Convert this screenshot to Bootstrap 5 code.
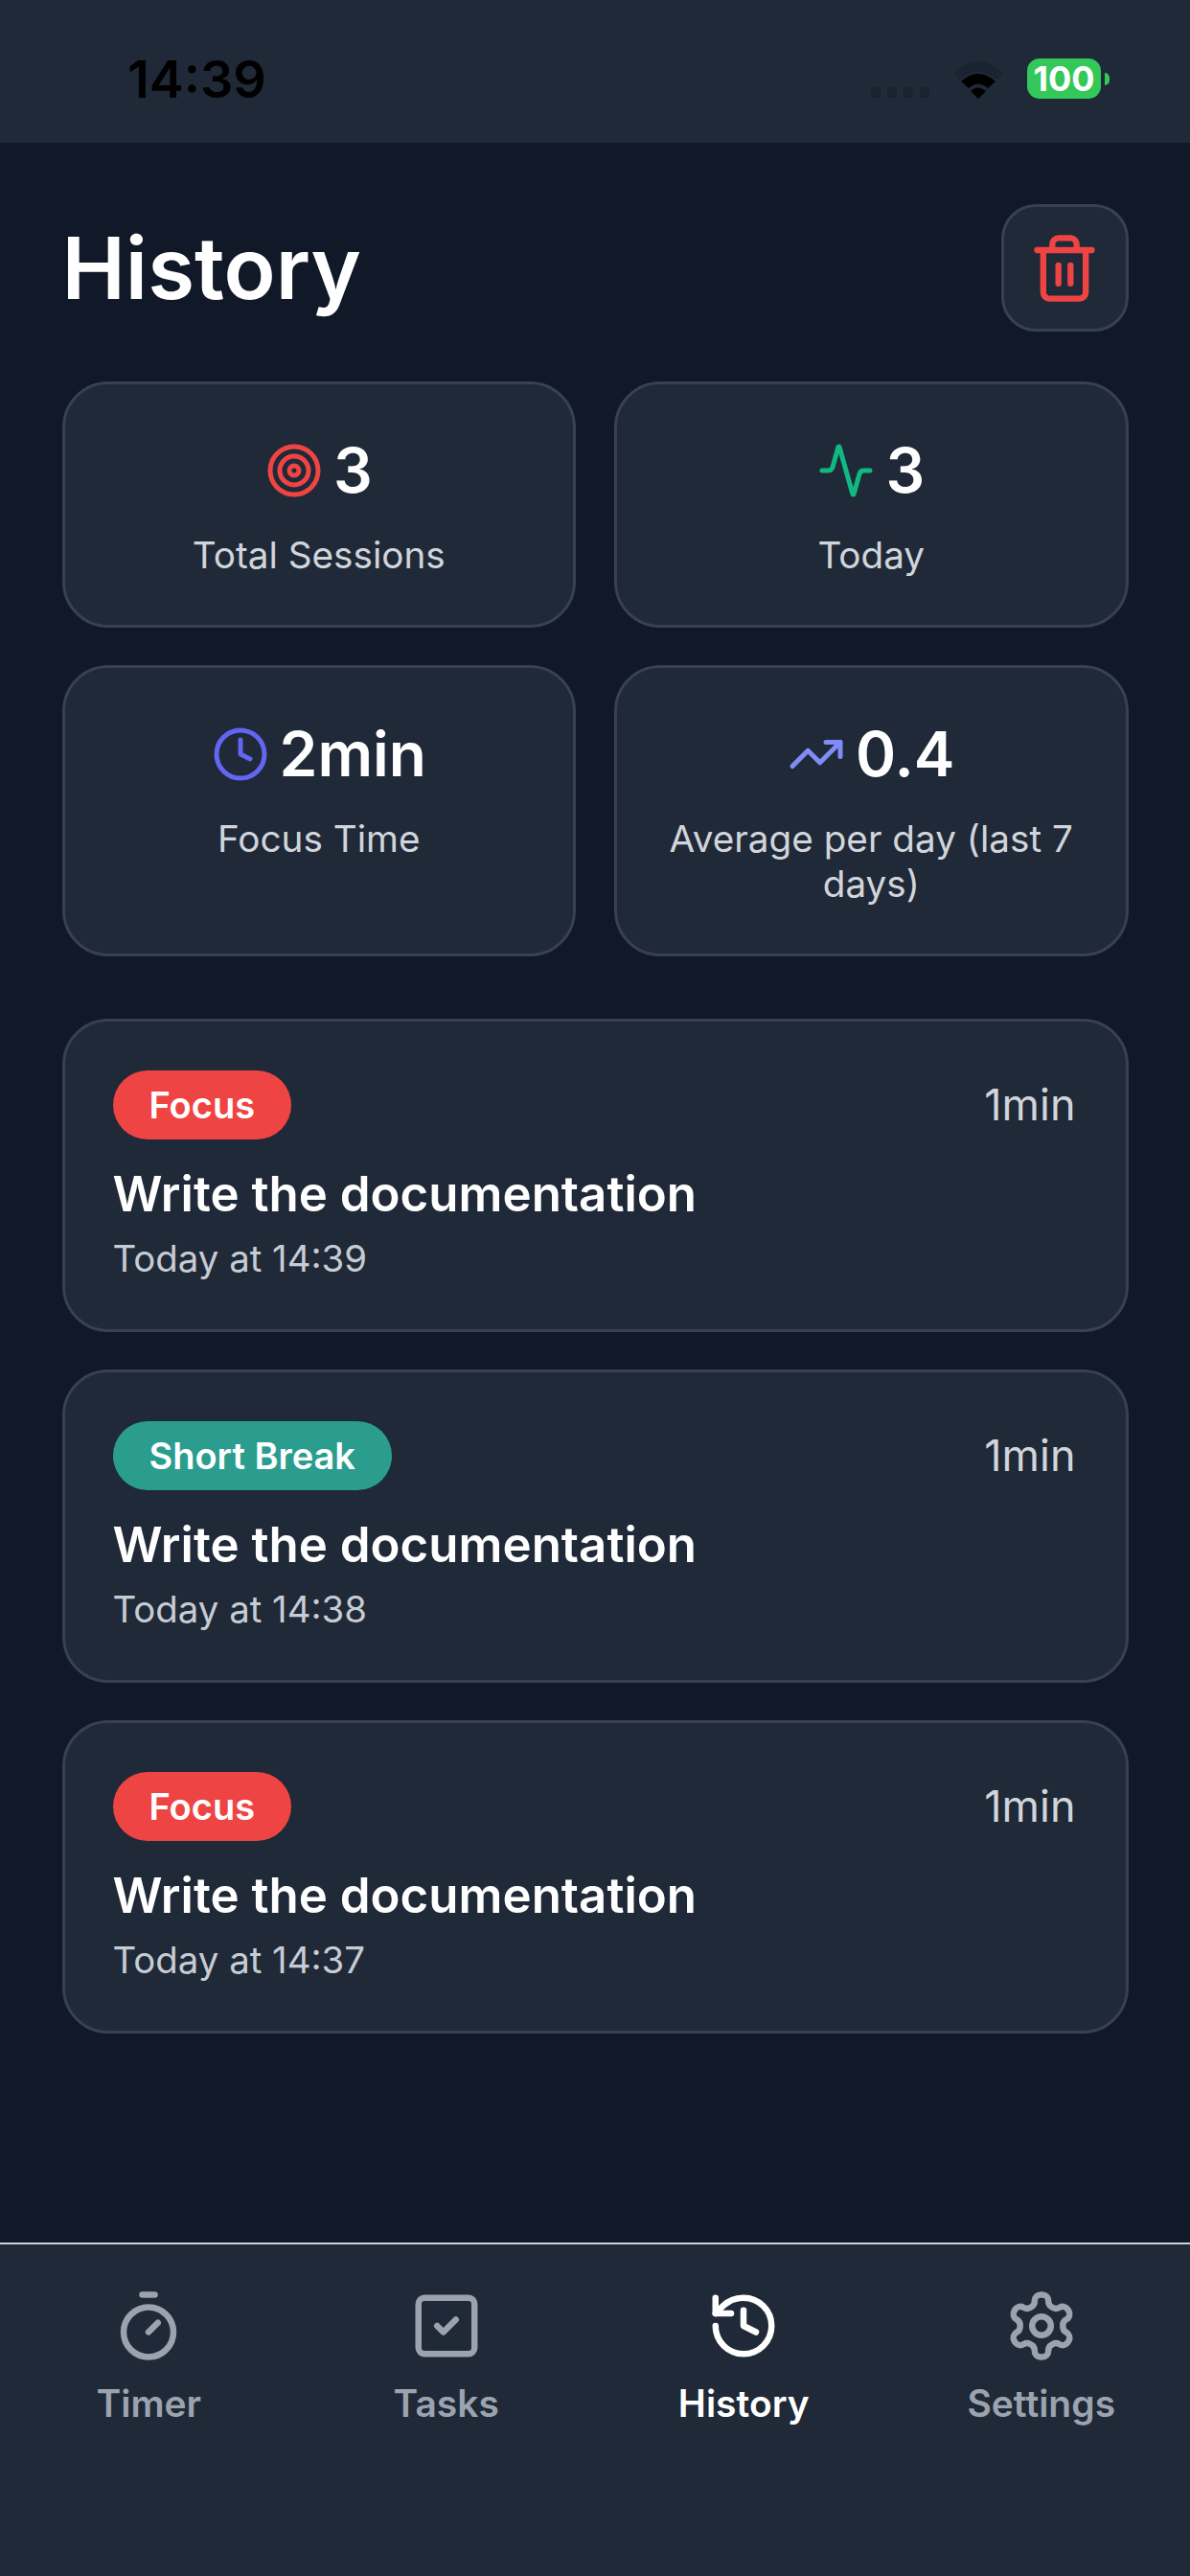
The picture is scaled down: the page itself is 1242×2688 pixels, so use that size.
<!DOCTYPE html>
<html lang="en">
<head>
    <meta charset="UTF-8">
    <title>History</title>
    <link href="https://cdn.jsdelivr.net/npm/bootstrap@5.3.2/dist/css/bootstrap.min.css" rel="stylesheet">
    <style>
        body {
            background-color: #111827;
            font-family: "Inter", "Liberation Sans", sans-serif;
            color: #fff;
        }
        .status-bar {
            height: 149px;
            background-color: #1f2937;
            padding: 56px 84px 0 133px;
        }
        .status-time {
            font-size: 54px;
            font-weight: 600;
            line-height: 54px;
            color: #000;
        }
        .status-right {
            margin-top: 5px;
        }
        .signal-dots {
            gap: 7px;
            padding-bottom: 1px;
        }
        .signal-dot {
            width: 10px;
            height: 11px;
            border-radius: 4px;
            background-color: #19222e;
        }
        .wifi-icon {
            margin: 0 25px;
        }
        .battery-body {
            width: 77px;
            height: 42px;
            border-radius: 13px;
            background-color: #34c759;
            font-size: 36px;
            font-weight: 700;
            line-height: 42px;
            text-align: center;
        }
        .battery-nub {
            width: 5px;
            height: 13px;
            margin-left: 4px;
            border-radius: 0 6px 6px 0;
            background-color: #34c759;
        }
        .page-main {
            padding: 64px 64.5px 0;
        }
        .page-title {
            font-size: 89px;
            font-weight: 600;
            line-height: 133px;
            margin: 0;
        }
        .trash-btn {
            width: 133px;
            height: 133px;
            background-color: #1f2937;
            border: 3px solid #374151;
            border-radius: 36px;
            padding: 0;
        }
        .stat-grid {
            display: grid;
            grid-template-columns: 1fr 1fr;
            column-gap: 40px;
            row-gap: 39px;
            margin-top: 52px;
            margin-bottom: 65px;
        }
        .dark-card {
            background-color: #1f2937;
            border: 3px solid #374151;
            border-radius: 48px;
            color: #fff;
        }
        .stat-card {
            padding: 48px 30px 49px;
        }
        .stat-value {
            font-size: 64px;
            font-weight: 600;
            line-height: 84px;
            gap: 11px;
        }
        .stat-label {
            margin-top: 23px;
            font-size: 38.7px;
            line-height: 47px;
            color: #d1d5db;
        }
        .item-card {
            padding: 51px 52px 51px 50px;
        }
        .item-stack {
            gap: 39px;
        }
        .type-pill {
            height: 72px;
            padding: 0 38px;
            font-size: 38px;
            font-weight: 600;
            line-height: 72px;
            color: #fff;
        }
        .pill-focus {
            background-color: #ef4444;
        }
        .pill-break {
            background-color: #2a9d8f;
        }
        .item-length {
            font-size: 45px;
            color: #d1d5db;
        }
        .item-title {
            margin-top: 27px;
            font-size: 51px;
            font-weight: 600;
            line-height: 60px;
        }
        .item-date {
            margin-top: 14px;
            font-size: 38.4px;
            line-height: 46px;
            color: #c7cbd3;
        }
        .tab-bar {
            height: 348px;
            background-color: #1f2937;
            border-top: 2px solid #cfd3da;
            padding-top: 46px;
        }
        .tab-link {
            color: #9ca3af;
            font-size: 39px;
            font-weight: 600;
            line-height: 46px;
            text-decoration: none;
        }
        .tab-active {
            color: #fff;
        }
        .tab-link svg {
            margin-bottom: 19px;
        }
        .line-icon {
            fill: none;
            stroke: currentColor;
            stroke-width: 2;
            stroke-linecap: round;
            stroke-linejoin: round;
        }
        .ic-red { color: #ef4444; }
        .ic-green { color: #10b981; }
        .ic-indigo { color: #6366f1; }
        .ic-violet { color: #818cf8; }
    </style>
</head>
<body class="d-flex flex-column vh-100">

<!-- status bar -->
<div class="status-bar d-flex justify-content-between align-items-start flex-shrink-0">
    <div class="status-time">14:39</div>
    <div class="status-right d-flex align-items-end">
        <div class="signal-dots d-flex">
            <span class="signal-dot"></span><span class="signal-dot"></span><span class="signal-dot"></span><span class="signal-dot"></span>
        </div>
        <svg class="wifi-icon" width="52" height="39" viewBox="0 0 52 39">
            <path fill="#1a2430" d="M0 12Q26-12 52 12L45 19Q26 2 7 19Z"/>
            <path fill="#000" d="M8 21Q26 5 44 21L36 28Q26 19 16 28Z"/>
            <path fill="#000" d="M18 31Q26 24 34 31L26 39Z"/>
        </svg>
        <div class="d-flex align-items-center">
            <div class="battery-body">100</div>
            <div class="battery-nub"></div>
        </div>
    </div>
</div>

<main class="page-main flex-grow-1">
    <div class="d-flex justify-content-between align-items-center">
        <h1 class="page-title">History</h1>
        <button class="trash-btn btn d-flex align-items-center justify-content-center ic-red" type="button" aria-label="Clear history">
            <svg class="line-icon" width="76" height="76" viewBox="0 0 24 24"><path d="M3 6h18"/><path d="M19 6v14c0 1-1 2-2 2H7c-1 0-2-1-2-2V6"/><path d="M8 6V4c0-1 1-2 2-2h4c1 0 2 1 2 2v2"/><line x1="10" y1="11" x2="10" y2="17"/><line x1="14" y1="11" x2="14" y2="17"/></svg>
        </button>
    </div>

    <div class="stat-grid">
        <div class="card dark-card stat-card text-center">
            <div class="stat-value d-flex justify-content-center align-items-center">
                <svg class="line-icon ic-red" width="60" height="60" viewBox="0 0 24 24"><circle cx="12" cy="12" r="10"/><circle cx="12" cy="12" r="6"/><circle cx="12" cy="12" r="2"/></svg>
                <span>3</span>
            </div>
            <div class="stat-label">Total Sessions</div>
        </div>
        <div class="card dark-card stat-card text-center">
            <div class="stat-value d-flex justify-content-center align-items-center">
                <svg class="line-icon ic-green" width="60" height="60" viewBox="0 0 24 24"><path d="M22 12h-2.48a2 2 0 0 0-1.93 1.46l-2.35 8.36a.25.25 0 0 1-.48 0L9.24 2.18a.25.25 0 0 0-.48 0l-2.35 8.36A2 2 0 0 1 4.49 12H2"/></svg>
                <span>3</span>
            </div>
            <div class="stat-label">Today</div>
        </div>
        <div class="card dark-card stat-card text-center">
            <div class="stat-value d-flex justify-content-center align-items-center">
                <svg class="line-icon ic-indigo" width="60" height="60" viewBox="0 0 24 24"><circle cx="12" cy="12" r="10"/><polyline points="12 6 12 12 16 14"/></svg>
                <span>2min</span>
            </div>
            <div class="stat-label">Focus Time</div>
        </div>
        <div class="card dark-card stat-card text-center">
            <div class="stat-value d-flex justify-content-center align-items-center">
                <svg class="line-icon ic-violet" width="60" height="60" viewBox="0 0 24 24"><polyline points="22 7 13.5 15.5 8.5 10.5 2 17"/><polyline points="16 7 22 7 22 13"/></svg>
                <span>0.4</span>
            </div>
            <div class="stat-label">Average per day (last 7 days)</div>
        </div>
    </div>

    <div class="item-stack d-flex flex-column">
        <div class="card dark-card item-card">
            <div class="d-flex justify-content-between align-items-center">
                <span class="type-pill pill-focus rounded-pill">Focus</span>
                <span class="item-length">1min</span>
            </div>
            <div class="item-title">Write the documentation</div>
            <div class="item-date">Today at 14:39</div>
        </div>
        <div class="card dark-card item-card">
            <div class="d-flex justify-content-between align-items-center">
                <span class="type-pill pill-break rounded-pill">Short Break</span>
                <span class="item-length">1min</span>
            </div>
            <div class="item-title">Write the documentation</div>
            <div class="item-date">Today at 14:38</div>
        </div>
        <div class="card dark-card item-card">
            <div class="d-flex justify-content-between align-items-center">
                <span class="type-pill pill-focus rounded-pill">Focus</span>
                <span class="item-length">1min</span>
            </div>
            <div class="item-title">Write the documentation</div>
            <div class="item-date">Today at 14:37</div>
        </div>
    </div>
</main>

<!-- bottom tabs -->
<nav class="tab-bar d-flex flex-shrink-0">
    <a class="tab-link d-flex flex-column align-items-center flex-fill w-25" href="#">
        <svg class="line-icon" width="78" height="78" viewBox="0 0 24 24"><line x1="10" y1="2" x2="14" y2="2"/><line x1="12" y1="14" x2="15" y2="11"/><circle cx="12" cy="14" r="8"/></svg>
        Timer
    </a>
    <a class="tab-link d-flex flex-column align-items-center flex-fill w-25" href="#">
        <svg class="line-icon" width="78" height="78" viewBox="0 0 24 24"><rect x="3" y="3" width="18" height="18" rx="2"/><path d="m9 12 2 2 4-4"/></svg>
        Tasks
    </a>
    <a class="tab-link tab-active d-flex flex-column align-items-center flex-fill w-25" href="#">
        <svg class="line-icon" width="78" height="78" viewBox="0 0 24 24"><path d="M3 12a9 9 0 1 0 9-9 9.75 9.75 0 0 0-6.74 2.74L3 8"/><path d="M3 3v5h5"/><path d="M12 7v5l4 2"/></svg>
        History
    </a>
    <a class="tab-link d-flex flex-column align-items-center flex-fill w-25" href="#">
        <svg class="line-icon" width="78" height="78" viewBox="0 0 24 24"><path d="M12.22 2h-.44a2 2 0 0 0-2 2v.18a2 2 0 0 1-1 1.73l-.43.25a2 2 0 0 1-2 0l-.15-.08a2 2 0 0 0-2.73.73l-.22.38a2 2 0 0 0 .73 2.73l.15.1a2 2 0 0 1 1 1.72v.51a2 2 0 0 1-1 1.74l-.15.09a2 2 0 0 0-.73 2.73l.22.38a2 2 0 0 0 2.73.73l.15-.08a2 2 0 0 1 2 0l.43.25a2 2 0 0 1 1 1.73V20a2 2 0 0 0 2 2h.44a2 2 0 0 0 2-2v-.18a2 2 0 0 1 1-1.73l.43-.25a2 2 0 0 1 2 0l.15.08a2 2 0 0 0 2.73-.73l.22-.39a2 2 0 0 0-.73-2.73l-.15-.08a2 2 0 0 1-1-1.74v-.5a2 2 0 0 1 1-1.74l.15-.09a2 2 0 0 0 .73-2.73l-.22-.38a2 2 0 0 0-2.73-.73l-.15.08a2 2 0 0 1-2 0l-.43-.25a2 2 0 0 1-1-1.73V4a2 2 0 0 0-2-2z"/><circle cx="12" cy="12" r="3"/></svg>
        Settings
    </a>
</nav>

<script src="https://cdn.jsdelivr.net/npm/bootstrap@5.3.2/dist/js/bootstrap.bundle.min.js"></script>
</body>
</html>
